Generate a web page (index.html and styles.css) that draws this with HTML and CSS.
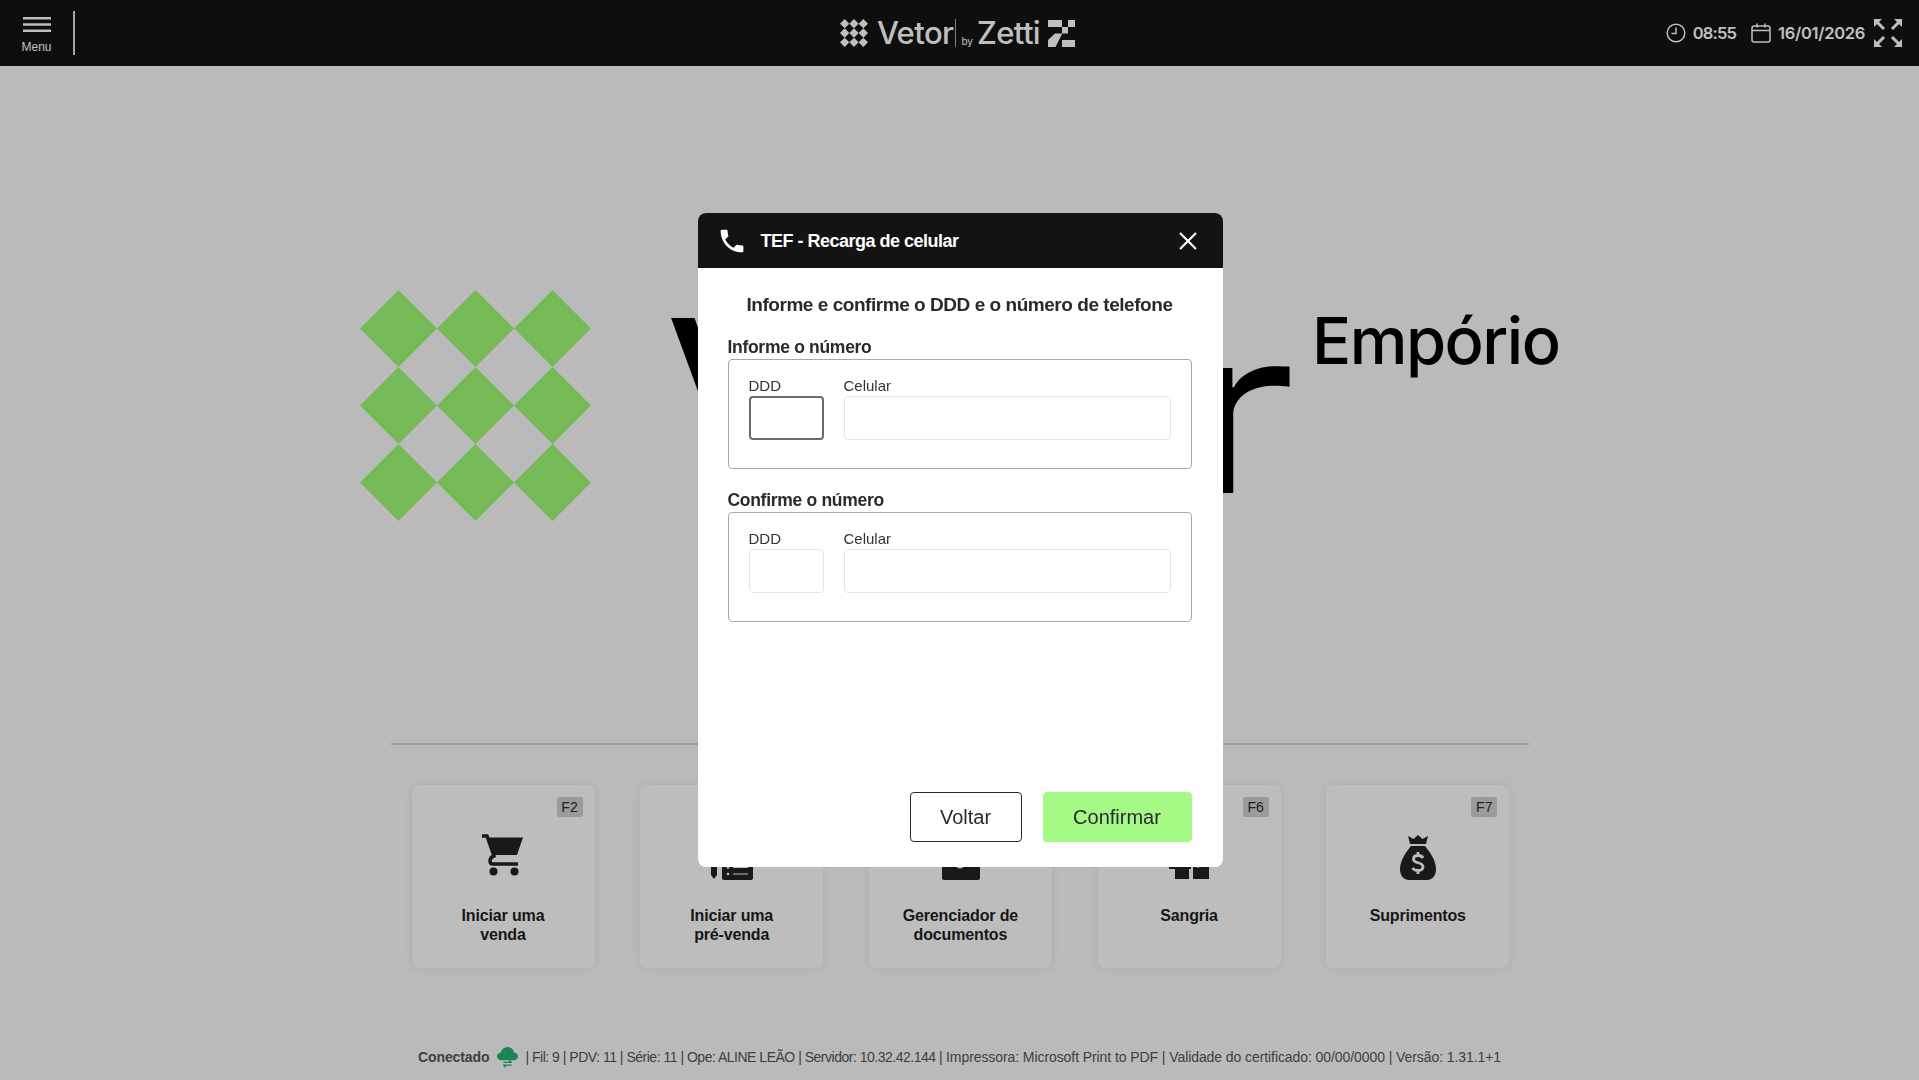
FILE: index.html
```html
<!DOCTYPE html>
<html>
<head>
    <title>Vetor - TEF Recarga de celular</title>
    <link rel="stylesheet" href="styles.css">
</head>
<body>

<svg class="defs" width="0" height="0">
    <symbol id="diamonds" viewBox="0 0 6 6">
        <path d="M1 0l1 1-1 1-1-1zM3 0l1 1-1 1-1-1zM5 0l1 1-1 1-1-1zM1 2l1 1-1 1-1-1zM3 2l1 1-1 1-1-1zM5 2l1 1-1 1-1-1zM1 4l1 1-1 1-1-1zM3 4l1 1-1 1-1-1zM5 4l1 1-1 1-1-1z"/>
    </symbol>
</svg>

<header class="topbar">
    <div class="topbar-left">
        <div class="menu-btn">
            <svg class="menu-icon" viewBox="0 0 28 15"><path d="M0 1.300h28M0 7.500h28M0 13.700h28"/></svg>
            <span>Menu</span>
        </div>
        <div class="menu-sep"></div>
    </div>
    <div class="brand">
        <svg class="brand-grid"><use href="#diamonds"/></svg>
        <span class="brand-vetor">Vetor</span>
        <span class="brand-sep"></span>
        <span class="brand-by">by</span>
        <span class="brand-zetti">Zetti</span>
        <svg class="brand-z" viewBox="0 0 27 27">
            <path d="M0 0h14v7H0zM20 0h7v7h-7zM14 7h6v6.500h-6zM7 13.500h7v.5L7.500 27H0v-7zM14 20h13v7H14z"/>
        </svg>
    </div>
    <div class="topbar-right">
        <svg class="info-icon" viewBox="0 0 20 20"><circle cx="10" cy="10" r="8.800"/><path d="M10 4.500V10.500H5.500"/></svg>
        <span class="info-text info-time">08:55</span>
        <svg class="info-icon cal" viewBox="0 0 20 20"><rect x="1" y="3" width="18" height="16" rx="2"/><path d="M1 7.500h18M6 .5v4M14 .5v4"/></svg>
        <span class="info-text">16/01/2026</span>
        <svg class="expand-icon" viewBox="0 0 28 28">
            <path d="M0 0h8L0 8zM28 0v8L20 0zM0 28v-8L8 28zM28 28h-8L28 20z"/>
            <path class="expand-line" d="M3 3l7 7M25 3l-7 7M3 25l7-7M25 25l-7-7"/>
        </svg>
    </div>
</header>

<main class="home">
    <div class="hero">
        <svg class="hero-mark"><use href="#diamonds"/></svg>
        <div class="hero-word"><span class="hero-v">V</span>eto<span class="hero-r">r</span></div>
        <div class="hero-store">Empório</div>
    </div>

    <div class="actions">
        <div class="card">
            <span class="key">F2</span>
            <svg class="card-icon" viewBox="0 0 44 46">
                <path class="line" d="M1 2h5l7 20c-3 1-4 3-4 5 0 2 1 3 3 3h25"/>
                <path d="M7.500 3.500H42L36 21H13z"/>
                <circle cx="12.500" cy="37.500" r="4"/><circle cx="33.500" cy="37.500" r="4"/>
            </svg>
            <div class="card-label">Iniciar uma<br>venda</div>
        </div>
        <div class="card">
            <span class="key">F3</span>
            <svg class="card-icon" viewBox="0 0 44 46">
                <path d="M1 14h6v27l-3 4-3-4z"/>
                <rect x="12" y="4" width="31" height="42" rx="2"/>
                <circle class="hole" cx="18" cy="33.500" r="1.300"/><circle class="hole" cx="18" cy="40" r="1.300"/>
                <path class="hole-line" d="M23 33.500h15M23 40h15"/>
            </svg>
            <div class="card-label">Iniciar uma<br>pré-venda</div>
        </div>
        <div class="card">
            <span class="key">F4</span>
            <svg class="card-icon" viewBox="0 0 44 46">
                <path d="M4 4h36a2 2 0 0 1 2 2v38a2 2 0 0 1-2 2H6a2 2 0 0 1-2-2z"/>
                <circle class="hole" cx="22" cy="31" r="3.500"/>
            </svg>
            <div class="card-label">Gerenciador de<br>documentos</div>
        </div>
        <div class="card">
            <span class="key">F6</span>
            <svg class="card-icon" viewBox="0 0 44 46">
                <path d="M2 12h22v23h-2v10H8V35H2z"/>
                <path d="M26 31l5 3 6-5 2-1h3v17H26z"/>
                <path d="M14 2h24v24H14z"/>
            </svg>
            <div class="card-label">Sangria</div>
        </div>
        <div class="card">
            <span class="key">F7</span>
            <svg class="card-icon" viewBox="0 0 44 46">
                <path d="M12 2l5.500 3L22 1l4.500 4L32 2l-2 8H14z"/>
                <path d="M15 12h14c4 5 11 14 11 23 0 7-4 11-9 11H13C8 46 4 42 4 35c0-9 7-18 11-23z"/>
                <path class="dollar" d="M27 24c-1-2-2.500-2.500-5-2.500-3 0-4.500 1.500-4.500 3.500 0 5 9.500 2.500 9.500 8 0 2-2 3.500-5 3.500-3 0-4.500-1-5.500-2.500M22 18v3.500M22 37v3"/>
            </svg>
            <div class="card-label">Suprimentos</div>
        </div>
    </div>

    <footer class="status">
        <strong>Conectado</strong>
        <svg class="cloud" viewBox="0 0 20 20">
            <path d="M4 12.500C1.500 12.500 0 11 0 9s1.500-3.500 3.500-3.500C4.500 2 7 0 10 0c3.300 0 5.600 2 6.500 5.500 2 0 3.500 1.500 3.500 3.500s-1.500 3.500-4 3.500z"/>
            <path class="arrows" d="M6 14.700h8M11.500 12.800l2.500 1.900M14 17.200H6M8.500 19.200L6 17.200"/>
        </svg>
        <span><span class="status-ids">| Fil: 9 | PDV: 11 | Série: 11 | Ope: ALINE LEÃO | Servidor: 10.32.42.144 |</span> <span class="status-info">Impressora: Microsoft Print to PDF | Validade do certificado: 00/00/0000 | Versão: 1.31.1+1</span></span>
    </footer>
</main>

<div class="overlay">
    <div class="modal">
        <div class="modal-head">
            <svg class="phone-icon" viewBox="2.500 2.500 19 19"><path d="M6.620 10.790c1.440 2.830 3.760 5.140 6.590 6.590l2.200-2.200c.27-.27.67-.36 1.020-.24 1.120.37 2.330.57 3.570.57.55 0 1 .45 1 1V20c0 .55-.45 1-1 1-9.390 0-17-7.610-17-17 0-.55.45-1 1-1h3.500c.55 0 1 .45 1 1 0 1.250.2 2.450.57 3.570.11.35.03.74-.25 1.020l-2.200 2.200z"/></svg>
            <span class="modal-title">TEF - Recarga de celular</span>
            <svg class="close-icon" viewBox="0 0 18 18"><path d="M1 1l16 16M17 1L1 17"/></svg>
        </div>
        <div class="modal-body">
            <h2>Informe e confirme o DDD e o número de telefone</h2>

            <div class="phone-group">
                <h3>Informe o número</h3>
                <div class="phone-box">
                    <div class="field ddd">
                        <label>DDD</label>
                        <input type="text" class="focused">
                    </div>
                    <div class="field cel">
                        <label>Celular</label>
                        <input type="text">
                    </div>
                </div>
            </div>

            <div class="phone-group">
                <h3>Confirme o número</h3>
                <div class="phone-box">
                    <div class="field ddd">
                        <label>DDD</label>
                        <input type="text">
                    </div>
                    <div class="field cel">
                        <label>Celular</label>
                        <input type="text">
                    </div>
                </div>
            </div>

            <div class="modal-buttons">
                <button class="btn btn-back">Voltar</button>
                <button class="btn btn-ok">Confirmar</button>
            </div>
        </div>
    </div>
</div>

</body>
</html>
```

FILE: styles.css
```css
* {
    box-sizing: border-box;
}
body {
    font-family: "Liberation Sans", Arial, sans-serif;
    background-color: #f8f8f8;
    color: #222;
    margin: 0;
    height: 1080px;
    overflow: hidden;
    display: flex;
    flex-direction: column;
}
.defs {
    position: absolute;
}

/* top bar */
.topbar {
    height: 66px;
    background-color: #131313;
    color: #fff;
    display: grid;
    grid-template-columns: 1fr auto 1fr;
    align-items: center;
    flex-shrink: 0;
}
.topbar-left {
    display: flex;
    align-items: center;
}
.menu-btn {
    width: 73px;
    display: flex;
    flex-direction: column;
    align-items: center;
    font-size: 12px;
    line-height: 14px;
    padding-top: 5px;
}
.menu-icon {
    width: 28px;
    height: 15px;
    margin-bottom: 8px;
    fill: none;
    stroke: #fff;
    stroke-width: 2.400;
}
.menu-sep {
    width: 2px;
    height: 44px;
    background-color: #ddd;
}
.brand {
    display: flex;
    align-items: center;
    margin-right: 4px;
    fill: #fff;
}
.brand-grid {
    width: 28px;
    height: 28px;
    margin-right: 9px;
}
.brand-vetor, .brand-zetti {
    font-family: Inter, sans-serif;
    font-size: 31px;
    line-height: 32px;
    letter-spacing: -0.6px;
    font-weight: 500;
}
.brand-sep {
    width: 1px;
    height: 28px;
    background-color: #aaa;
    margin: 0 5px 0 2px;
}
.brand-by {
    font-family: Inter, sans-serif;
    font-size: 10px;
    align-self: flex-end;
    margin: 0 4px 2px 0;
}
.brand-z {
    width: 27px;
    height: 27px;
    margin-left: 8px;
}
.topbar-right {
    display: flex;
    align-items: center;
    justify-content: flex-end;
    padding-right: 17px;
}
.info-icon {
    width: 20px;
    height: 20px;
    fill: none;
    stroke: #fff;
    stroke-width: 1.500;
    margin-right: 7px;
}
.cal {
    margin-left: 15px;
    margin-right: 7px;
}
.info-text {
    font-family: Inter, sans-serif;
    font-size: 16.500px;
    font-weight: 600;
    letter-spacing: -0.3px;
}
.info-time {
    letter-spacing: -0.8px;
}
.expand-icon {
    width: 28px;
    height: 28px;
    margin-left: 9px;
    fill: #fff;
}
.expand-line {
    fill: none;
    stroke: #fff;
    stroke-width: 3;
}

/* home */
.home {
    flex: 1;
    display: flex;
    flex-direction: column;
    align-items: center;
}
.hero {
    align-self: flex-start;
    display: flex;
    align-items: flex-start;
    height: 677px;
    margin-left: 360px;
    padding-top: 224px;
    color: #000;
    fill: #9cf875;
}
.hero-mark {
    width: 231px;
    height: 231px;
    flex-shrink: 0;
}
.hero-word {
    font-family: Inter, sans-serif;
    font-size: 229px;
    line-height: 290px;
    letter-spacing: 9px;
    margin: -25px 0 0 74px;
    width: 642px;
    white-space: nowrap;
}
.hero-v {
    font-size: 240px;
    line-height: 0;
}
.hero-r {
    display: inline-block;
    letter-spacing: 0;
    line-height: 0;
    transform: scaleX(1.3);
    transform-origin: right bottom;
}
.hero-store {
    font-family: Inter, sans-serif;
    font-size: 65px;
    line-height: 80px;
    letter-spacing: -1.500px;
    font-weight: 500;
    margin-left: 5px;
    margin-top: 11px;
}
.actions {
    width: 1138px;
    border-top: 2px solid #d0d0d0;
    padding: 40px 0 0 21px;
    display: flex;
    gap: 45.700px;
}
.card {
    position: relative;
    flex: none;
    width: 183px;
    height: 183px;
    background-color: #fcfcfc;
    border-radius: 7px;
    box-shadow: 0 0 8px rgba(0, 0, 0, 0.08);
    padding-top: 49px;
    text-align: center;
}
.key {
    position: absolute;
    top: 12px;
    right: 12px;
    min-width: 26px;
    height: 20px;
    padding: 0 4px;
    background-color: #cfcfcf;
    border-radius: 2px;
    font-size: 14px;
    line-height: 20px;
    color: #2a2a2a;
}
.card-icon {
    display: block;
    width: 44px;
    height: 46px;
    margin: 0 auto 26px;
    fill: #222;
}
.card-icon .line {
    fill: none;
    stroke: #222;
    stroke-width: 3.500;
}
.hole {
    fill: #fcfcfc;
}
.hole-line {
    fill: none;
    stroke: #fcfcfc;
    stroke-width: 1.200;
}
.dollar {
    fill: none;
    stroke: #fcfcfc;
    stroke-width: 2.800;
}
.card-label {
    font-size: 16px;
    line-height: 19px;
    letter-spacing: -0.15px;
    font-weight: bold;
    color: #1f1f1f;
}
.status {
    margin-top: 77px;
    display: flex;
    align-items: center;
    height: 24px;
    font-size: 14px;
    color: #555;
}
.status strong {
    margin-right: 8px;
    letter-spacing: -0.1px;
}
.status-ids {
    letter-spacing: -0.49px;
}
.status-info {
    letter-spacing: -0.08px;
}
.cloud {
    width: 21px;
    height: 21px;
    margin-right: 7px;
    fill: #29b06f;
}
.arrows {
    fill: none;
    stroke: #29b06f;
    stroke-width: 1.300;
}

/* modal */
.overlay {
    position: fixed;
    inset: 0;
    background-color: rgba(0, 0, 0, 0.25);
    display: flex;
    align-items: center;
    justify-content: center;
}
.modal {
    width: 525px;
    height: 654px;
    margin-left: 1px;
    background-color: #fff;
    border-radius: 8px;
    display: flex;
    flex-direction: column;
    overflow: hidden;
}
.modal-head {
    height: 55px;
    background-color: #131313;
    color: #fff;
    display: flex;
    align-items: center;
    padding: 1px 22px 0;
    flex-shrink: 0;
}
.phone-icon {
    width: 24px;
    height: 24px;
    fill: #fff;
    margin-right: 17px;
}
.modal-title {
    flex: 1;
    font-size: 18px;
    font-weight: bold;
    letter-spacing: -0.5px;
}
.close-icon {
    width: 18px;
    height: 18px;
    margin-right: 4px;
    fill: none;
    stroke: #fff;
    stroke-width: 2.200;
}
.modal-body {
    flex: 1;
    display: flex;
    flex-direction: column;
    padding: 26px 31px 25px 30px;
}
.modal-body h2 {
    margin: 0 0 21px;
    font-size: 19px;
    line-height: 22px;
    letter-spacing: -0.46px;
    text-align: center;
    color: #2a2a2a;
}
.phone-group h3 {
    margin: 0 0 2px;
    font-size: 17.500px;
    line-height: 20px;
    letter-spacing: -0.3px;
    color: #2a2a2a;
}
.phone-group + .phone-group {
    margin-top: 21px;
}
.phone-box {
    height: 110px;
    border: 1.500px solid #a8a8a8;
    border-radius: 4px;
    padding: 16px 20px 0;
    display: flex;
    gap: 20px;
}
.field label {
    display: block;
    font-size: 15px;
    line-height: 19px;
    margin-bottom: 1px;
    color: #333;
}
.field input {
    display: block;
    width: 100%;
    height: 44px;
    border: 1.500px solid #e4e4e4;
    border-radius: 4px;
    outline: none;
}
.field input.focused {
    border: 2px solid #6a6a6a;
}
.ddd {
    width: 75px;
}
.cel {
    flex: 1;
}
.modal-buttons {
    margin-top: auto;
    display: flex;
    justify-content: flex-end;
    gap: 21px;
}
.btn {
    height: 50px;
    font-family: inherit;
    font-size: 20px;
    color: #2a2a2a;
    border-radius: 4px;
    cursor: pointer;
}
.btn-back {
    width: 112px;
    background-color: #fff;
    border: 1.500px solid #2a2a2a;
}
.btn-ok {
    width: 149px;
    background-color: #a5f985;
    border: none;
}
```
